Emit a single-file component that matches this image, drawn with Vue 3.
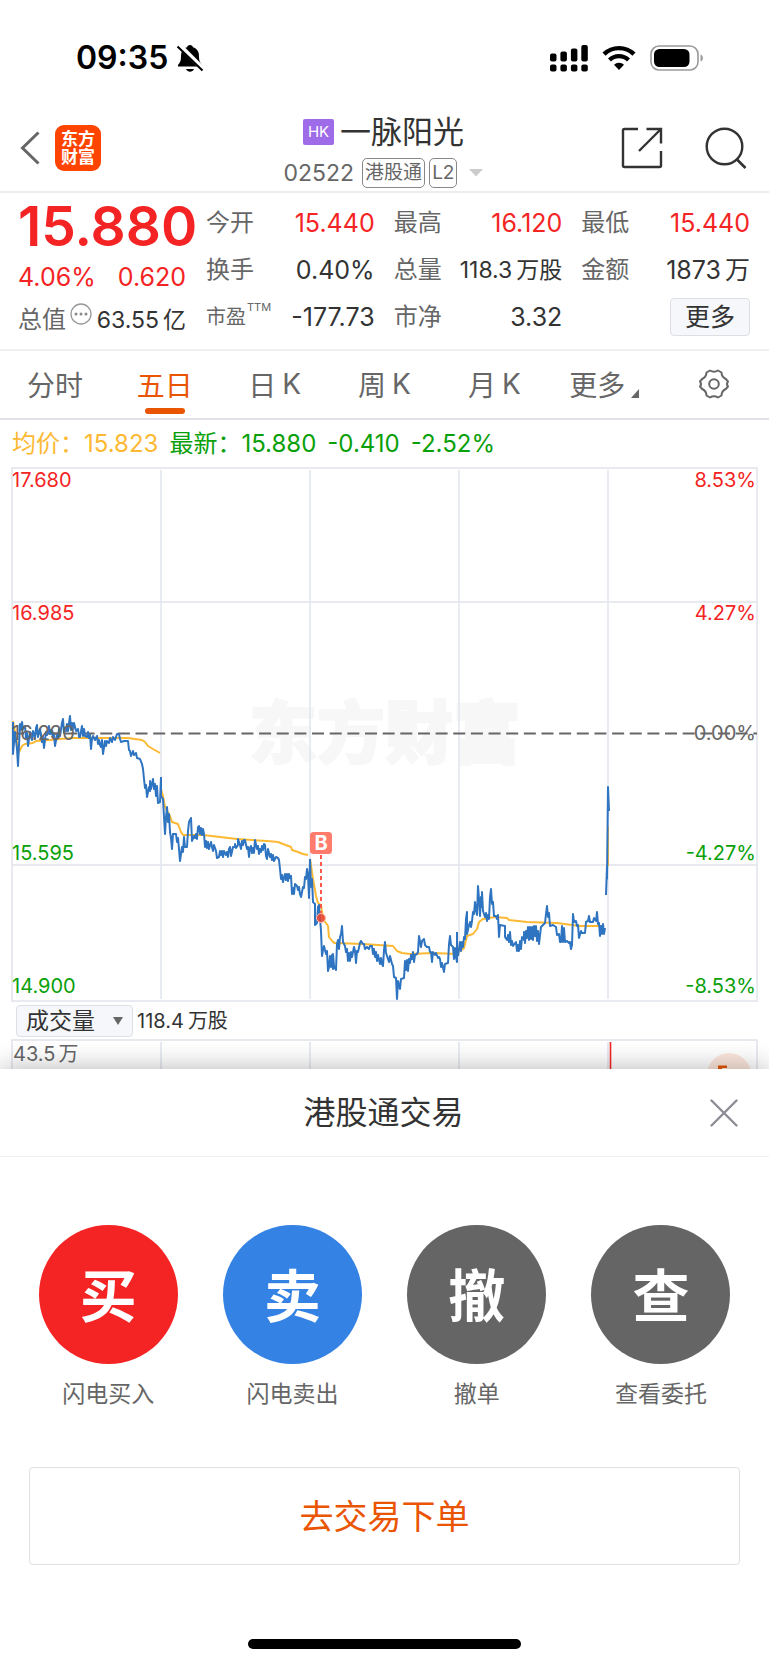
<template>
  <div class="page">
    <header class="status-bar">
      <div class="status-time">
        <span>09:35</span>
        <svg class="icon-bell" viewBox="0 0 28 28" aria-hidden="true">
          <path d="M14 1c1.6 0 2.8 1 3 2.300 4 1.400 6 4.600 6 8.700 0 5 1 6.500 3 9v1.500H2V21c2-2.500 3-4 3-9 0-4.100 2-7.300 6-8.700C11.200 2 12.400 1 14 1z" />
          <path d="M10 25h8c-.8 1.800-2.300 2.800-4 2.800s-3.200-1-4-2.800z" />
          <path d="M3 1l24 24" stroke="#fff" stroke-width="5" />
          <path d="M1.500 2.500l25 24" stroke="#000" stroke-width="2" />
        </svg>
      </div>
      <div class="status-icons">
        <svg class="icon-signal" viewBox="0 0 38 27" aria-hidden="true">
          <rect x="0" y="8.500" width="6.500" height="8" rx="2" />
          <rect x="10.400" y="6.500" width="6.500" height="10" rx="2" />
          <rect x="20.900" y="3.500" width="6.500" height="13" rx="2" />
          <rect x="31.300" y="0" width="6.500" height="16.500" rx="2" />
          <rect x="0" y="19.500" width="6.500" height="7" rx="2" />
          <rect x="10.400" y="19.500" width="6.500" height="7" rx="2" />
          <rect x="20.900" y="19.500" width="6.500" height="7" rx="2" />
          <rect x="31.300" y="19.500" width="6.500" height="7" rx="2" />
        </svg>
        <svg class="icon-wifi" viewBox="0 0 34 26" aria-hidden="true">
          <path d="M2 9.200a21.500 21.500 0 0 1 30 0" fill="none" stroke="#000" stroke-width="4.400" />
          <path d="M7.500 15a13.500 13.500 0 0 1 19 0" fill="none" stroke="#000" stroke-width="4.200" />
          <path d="M17 25l-5-5.200a7 7 0 0 1 10 0z" />
        </svg>
        <svg class="icon-battery" viewBox="0 0 54 26" aria-hidden="true">
          <rect x="1" y="1" width="47" height="24" rx="8" fill="none" stroke="#9a9a9a" stroke-width="1.600" />
          <rect x="4" y="4" width="35.500" height="18" rx="5.500" />
          <path d="M50.500 9.500c3.200 1 3.200 6 0 7z" fill="#9a9a9a" />
        </svg>
      </div>
    </header>

    <nav class="nav">
      <div class="nav-left">
        <button class="icon-button" aria-label="返回">
          <svg class="icon-back" viewBox="0 0 20 34" aria-hidden="true">
            <path d="M18.500 1.500L2.500 17l16 15.500" fill="none" stroke="#666" stroke-width="3" />
          </svg>
        </button>
        <a class="logo" href="#"><span>东方</span><span>财富</span></a>
      </div>
      <div class="nav-title">
        <h1 class="stock-name"><span class="market">HK</span>一脉阳光</h1>
        <div class="stock-code">
          <span class="code">02522</span>
          <span class="tag">港股通</span>
          <span class="tag">L2</span>
          <svg class="icon-caret" viewBox="0 0 14 8" aria-hidden="true"><path d="M0 0h14L7 7.500z" fill="#ccc" /></svg>
        </div>
      </div>
      <div class="nav-right">
        <button class="icon-button" aria-label="分享">
          <svg class="icon-tool" viewBox="0 0 42 42" aria-hidden="true">
            <path d="M17 2H3.500Q2 2 2 3.500V38.500Q2 40 3.500 40H38.500Q40 40 40 38.500V24M25.500 2H40V16.500M39.500 2.500L18 24" fill="none" stroke="#333" stroke-width="2.400" />
          </svg>
        </button>
        <button class="icon-button" aria-label="搜索">
          <svg class="icon-tool" viewBox="0 0 42 42" aria-hidden="true">
            <circle cx="19.500" cy="19.500" r="17.800" fill="none" stroke="#333" stroke-width="2.400" />
            <path d="M31.500 32l9 9" stroke="#333" stroke-width="2.600" />
          </svg>
        </button>
      </div>
    </nav>

    <section class="quote">
      <div class="quote-main">
        <div class="price">15.880</div>
        <div class="change"><span>4.06%</span><span>0.620</span></div>
        <div class="cap">
          <span class="label">总值</span>
          <svg class="icon-more" viewBox="0 0 22 22" aria-hidden="true">
            <circle cx="11" cy="11" r="10" fill="none" stroke="#999" stroke-width="1.300" />
            <circle cx="6" cy="11" r="1.500" fill="#888" />
            <circle cx="11" cy="11" r="1.500" fill="#888" />
            <circle cx="16" cy="11" r="1.500" fill="#888" />
          </svg>
          <span class="cap-value">63.55<span class="unit">亿</span></span>
        </div>
      </div>
      <dl class="quote-grid">
        <div v-for="item in quotes" :key="item.label" class="quote-item">
          <dt :class="{ small: item.sup }">{{ item.label }}<sup v-if="item.sup">{{ item.sup }}</sup></dt>
          <dd :class="{ up: item.up, small: item.small }">{{ item.value }}<span v-if="item.unit" class="unit">{{ item.unit }}</span></dd>
        </div>
        <div class="quote-item quote-item--end">
          <button class="more-button">更多</button>
        </div>
      </dl>
    </section>

    <div class="tabs">
      <button
        v-for="tab in tabs"
        :key="tab.label"
        class="tab"
        :class="{ 'tab--active': tab.label === activeTab }"
        @click="activeTab = tab.label"
      >
        <span>{{ tab.label }}</span>
        <span v-if="tab.suffix">{{ tab.suffix }}</span>
        <svg v-if="tab.menu" class="icon-corner" viewBox="0 0 8 9" aria-hidden="true"><path d="M8 0v9H0z" fill="#666" /></svg>
      </button>
      <button class="tab" aria-label="设置">
        <svg class="icon-gear" viewBox="0 0 32 32" aria-hidden="true">
          <path d="M12 2.500Q16 4.800 20 2.500L23.500 4.500Q23.600 8.900 27.800 11L30 13.500Q28 16 30 18.500L27.800 21Q23.600 23.100 23.500 27.500L20 29.500Q16 27.200 12 29.500L8.500 27.500Q8.400 23.100 4.200 21L2 18.500Q4 16 2 13.500L4.200 11Q8.400 8.900 8.500 4.500Z" fill="none" stroke="#666" stroke-width="2" stroke-linejoin="round" />
          <circle cx="16" cy="16" r="4.800" fill="none" stroke="#666" stroke-width="2" />
        </svg>
      </button>
    </div>

    <div class="legend">
      <span class="legend-avg">均价：15.823</span>
      <span>最新：15.880</span>
      <span>-0.410</span>
      <span>-2.52%</span>
    </div>

    <svg class="chart" viewBox="0 0 769 535" role="img" aria-label="五日走势">
      <text class="watermark" x="385" y="291" text-anchor="middle">东方财富</text>
      <g stroke="#e1e4ec" stroke-width="1.500">
        <path d="M12 135H757M12 398H757" />
        <path v-for="x in gridX" :key="x" :d="`M${x} 3V532`" />
        <rect x="12" y="1" width="745" height="533" fill="none" />
      </g>
      <path d="M12 266.500H757" stroke="#666" stroke-width="2" stroke-dasharray="12 5.650" />
      <polyline v-for="(line, i) in avgLines" :key="'a' + i" class="line line--avg" :points="line" />
      <polyline v-for="(line, i) in priceLines" :key="'p' + i" class="line line--price" :points="line" />
      <g class="axis">
        <text
          v-for="row in axis"
          :key="row.price"
          :x="12"
          :y="row.y"
          :fill="row.color"
        >{{ row.price }}</text>
        <text
          v-for="row in axis"
          :key="row.percent"
          :x="756"
          :y="row.y"
          :fill="row.color"
          text-anchor="end"
        >{{ row.percent }}</text>
      </g>
      <path d="M321 388V446" stroke="#fa5a4b" stroke-width="2" stroke-dasharray="4 3" />
      <circle cx="321" cy="451" r="4.500" fill="#e8412f" fill-opacity=".85" stroke="#ffb9a8" stroke-width="1" />
      <rect x="310" y="365" width="22" height="22" rx="3.500" fill="#ff7b6c" />
      <text class="marker" x="321" y="383" text-anchor="middle">B</text>
    </svg>

    <div class="volume-bar">
      <div class="volume-select">
        <select aria-label="指标">
          <option>成交量</option>
        </select>
        <svg class="icon-down" viewBox="0 0 10 8" aria-hidden="true"><path d="M0 0h10L5 8z" fill="#666" /></svg>
      </div>
      <span class="volume-value">118.4<span class="unit">万股</span></span>
    </div>

    <svg class="volume-chart" viewBox="0 0 769 30" role="img" aria-label="成交量">
      <g stroke="#e1e4ec" stroke-width="1.500" fill="none">
        <path d="M12 30V1H757V30" />
        <path v-for="x in gridX" :key="x" :d="`M${x} 3V30`" />
      </g>
      <path d="M610.500 3V30" stroke="#f42424" stroke-width="1.600" />
      <circle cx="729" cy="36" r="22" fill="#fce6dc" />
      <path d="M718 30V26.500H727V29H722V30z" fill="#ea5504" />
      <text class="axis" x="13" y="22" fill="#666">43.5<tspan dx="3">万</tspan></text>
    </svg>

    <section class="sheet">
      <header class="sheet-header">
        <h2>港股通交易</h2>
        <button class="icon-button sheet-close" aria-label="关闭">
          <svg class="icon-close" viewBox="0 0 28 28" aria-hidden="true">
            <path d="M1.500 1.500l25 25M26.500 1.500l-25 25" stroke="#8c8c94" stroke-width="2.400" stroke-linecap="round" />
          </svg>
        </button>
      </header>
      <div class="actions">
        <button v-for="action in actions" :key="action.label" class="action">
          <span class="action-icon" :class="'action-icon--' + action.type">{{ action.char }}</span>
          <span class="action-label">{{ action.label }}</span>
        </button>
      </div>
      <button class="order-button">去交易下单</button>
      <div class="home-indicator"></div>
    </section>
  </div>
</template>

<script setup>
import { ref } from 'vue'

const tabs = [
  { label: '分时' },
  { label: '五日' },
  { label: '日', suffix: 'K' },
  { label: '周', suffix: 'K' },
  { label: '月', suffix: 'K' },
  { label: '更多', menu: true }
]
const activeTab = ref('五日')

const quotes = [
  { label: '今开', value: '15.440', up: true },
  { label: '最高', value: '16.120', up: true },
  { label: '最低', value: '15.440', up: true },
  { label: '换手', value: '0.40%' },
  { label: '总量', value: '118.3', unit: '万股', small: true },
  { label: '金额', value: '1873', unit: '万' },
  { label: '市盈', sup: 'TTM', value: '-177.73' },
  { label: '市净', value: '3.32' }
]

const actions = [
  { char: '买', label: '闪电买入', type: 'buy' },
  { char: '卖', label: '闪电卖出', type: 'sell' },
  { char: '撤', label: '撤单', type: 'plain' },
  { char: '查', label: '查看委托', type: 'plain' }
]

const gridX = [161, 310, 459, 608]

const axis = [
  { price: '17.680', percent: '8.53%', y: 20, color: '#f42424' },
  { price: '16.985', percent: '4.27%', y: 153, color: '#f42424' },
  { price: '16.290', percent: '0.00%', y: 273, color: '#666' },
  { price: '15.595', percent: '-4.27%', y: 393, color: '#0aa00a' },
  { price: '14.900', percent: '-8.53%', y: 526, color: '#0aa00a' }
]

// one line per trading day
const priceLines = [
  '13,255 13,287 15,265 17,282 18,299 20,257 21,263 22,255 23,262 25,259 26,271 27,266 28,279 30,265 31,269 32,273 33,264 35,271 36,261 37,258 38,270 39,265 40,262 42,275 43,270 44,281 46,265 47,268 49,259 50,267 51,263 53,270 54,268 55,279 57,268 58,271 59,262 60,269 62,256 63,252 64,266 65,261 66,264 67,257 68,264 70,249 71,263 72,256 73,262 74,256 76,264 78,262 79,270 80,270 82,259 83,269 84,262 85,269 87,270 88,265 89,271 90,268 91,282 92,272 93,269 95,273 97,269 98,277 99,273 100,278 101,280 102,273 103,287 105,274 106,279 107,274 109,276 110,271 112,275 113,270 115,273 117,267 119,267 120,272 121,275 124,274 128,274 129,283 130,284 131,289 133,284 134,288 136,286 137,291 140,292 142,297 143,302 144,312 145,321 146,318 147,330 149,320 150,324 150,314 151,322 153,312 154,322 155,317 156,329 157,319 158,336 160,335 161,310',
  '161,310 161,329 163,332 164,350 165,367 166,350 167,340 168,355 169,347 170,365 171,371 172,382 173,367 176,367 177,375 178,371 179,382 180,394 182,380 183,385 184,370 185,380 187,380 188,364 189,355 191,351 192,374 194,369 195,371 196,367 197,372 198,360 199,364 199,359 200,367 201,361 202,368 203,362 204,367 205,380 206,374 207,381 208,375 209,382 211,375 212,380 213,384 214,378 216,384 217,391 219,390 220,384 221,388 222,384 223,390 224,384 226,388 227,385 228,390 229,382 230,380 231,389 233,380 235,380 235,377 236,381 238,378 238,372 240,378 241,382 242,374 243,378 244,373 245,373 247,382 248,380 249,390 250,381 251,379 252,386 253,381 254,386 255,373 257,382 258,379 259,387 260,382 261,385 262,379 263,383 264,377 265,378 266,389 267,392 268,382 270,390 271,387 272,393 273,388 274,394 276,390 278,391 279,393 280,402 281,412 282,408 283,415 285,407 286,413 287,407 288,414 289,407 290,411 291,409 292,427 293,421 294,427 295,417 297,419 298,423 299,420 300,427 301,430 303,420 304,421 305,410 306,412 307,402 308,408 309,431 310,392',
  '310,392 311,420 312,412 313,435 315,437 315,458 317,456 318,440 319,438 320,451 321,464 322,489 323,483 324,479 326,487 327,484 328,504 329,500 330,489 331,500 332,488 333,502 333,487 334,499 336,503 337,477 338,473 339,482 340,470 341,467 342,459 343,475 345,479 346,485 347,482 348,494 349,486 350,494 351,485 352,490 354,480 355,484 356,496 357,484 358,485 360,476 361,474 363,477 364,477 365,482 367,480 369,482 370,479 372,479 373,487 374,482 375,490 376,485 377,494 378,488 380,497 381,491 382,497 383,499 384,483 385,475 386,486 387,489 389,495 390,489 392,497 393,499 394,510 396,511 397,532 398,514 400,522 401,512 404,511 405,494 406,503 407,493 408,504 409,492 410,496 411,488 412,492 413,485 414,495 415,488 417,487 418,485 419,469 421,480 422,474 424,472 425,478 427,480 429,480 430,485 431,485 432,495 433,485 435,488 436,486 438,491 439,490 440,492 441,500 442,496 444,505 445,497 448,496 449,477 450,469 451,478 453,480 454,492 455,481 456,490 457,495 457,465',
  '458,489 460,475 461,484 462,475 463,480 464,470 465,472 466,452 467,445 467,467 469,458 470,455 471,460 472,454 473,445 474,447 475,435 476,443 477,448 478,419 479,432 480,449 481,430 482,440 482,425 483,444 485,450 486,446 487,454 488,448 489,452 490,430 491,422 492,437 493,435 494,449 496,449 497,452 498,448 499,470 500,458 505,459 505,470 507,473 508,468 509,475 510,465 511,478 512,474 513,479 516,475 517,484 518,478 519,484 520,474 521,482 522,470 524,473 524,465 525,476 526,464 527,471 528,460 529,473 530,460 531,472 532,460 533,473 534,459 535,469 536,459 537,474 538,464 539,477 541,460 542,459 545,456 546,447 547,439 548,450 549,446 550,459 553,458 556,460 557,468 559,467 560,475 561,475 562,459 563,475 564,461 565,475 567,474 569,476 570,475 571,482 572,478 573,447 574,455 576,454 577,459 578,458 579,471 581,464 582,466 585,466 586,455 588,454 589,449 590,455 593,455 594,451 596,454 597,445 598,457 599,456 600,469 601,459 602,467 603,457 604,467 605,461',
  '606,428 607,399 607,412 608,320 609,344'
]

const avgLines = [
  '13,254 15,265 19,285 22,279 25,277 33,276 36,274 50,273 60,272 73,271 128,271 142,273 145,275 148,279 153,282 160,286',
  '161,322 163,329 165,340 170,349 172,355 178,357 181,365 183,368 203,368 220,370 237,372 267,374 278,375 283,377 291,380 292,383 298,385 303,387 308,388',
  '310,392 313,412 316,429 318,436 321,438 323,452 328,459 329,470 333,475 335,476 363,477 393,479 397,484 402,486 410,487 433,486 457,487',
  '459,485 464,481 467,469 473,467 477,462 479,455 483,452 495,450 507,451 509,453 527,455 557,456 580,459 602,459',
  '608,359 608,399'
]
</script>

<style>
body {
  margin: 0;
  background: #fff;
}
</style>

<style scoped>
.page {
  overflow: hidden;
  font-family: Inter, "Noto Sans CJK SC", sans-serif;
  color: #333;
  background: #fff;
}

button,
select {
  padding: 0;
  border: none;
  background: none;
  font-family: inherit;
  color: inherit;
  cursor: pointer;
}

svg {
  display: block;
  flex-shrink: 0;
}

.unit {
  margin-left: 4px;
}

.status-bar {
  display: flex;
  justify-content: space-between;
  align-items: center;
  height: 92px;
  padding: 12px 65px 0 76px;
}

.status-time {
  display: flex;
  align-items: center;
  gap: 8px;
  font-size: 32px;
  font-weight: 600;
  line-height: 40px;
  color: #000;
}

.status-icons {
  display: flex;
  align-items: center;
  gap: 14px;
}

.icon-bell {
  width: 28px;
  height: 28px;
}

.icon-signal {
  width: 38px;
  height: 27px;
}

.icon-wifi {
  width: 34px;
  height: 26px;
}

.icon-battery {
  width: 54px;
  height: 26px;
}

.nav {
  display: grid;
  grid-template-columns: 1fr auto 1fr;
  align-items: center;
  height: 87px;
  padding: 0 22px 0 20px;
  border-bottom: 2px solid #ededed;
}

.nav-left {
  display: flex;
  align-items: center;
  gap: 15px;
}

.icon-back {
  width: 20px;
  height: 34px;
}

.logo {
  display: flex;
  flex-direction: column;
  justify-content: center;
  align-items: center;
  width: 46px;
  height: 46px;
  border-radius: 9px;
  background: #ff4400;
  color: #fff;
  font-size: 17px;
  font-weight: 700;
  line-height: 18px;
  text-decoration: none;
}

.nav-title {
  display: flex;
  flex-direction: column;
  align-items: center;
  gap: 8px;
  padding-top: 6px;
}

.stock-name {
  display: flex;
  align-items: center;
  gap: 6px;
  margin: 0;
  font-size: 31px;
  font-weight: 400;
  line-height: 36px;
}

.market {
  padding: 0 5px;
  border-radius: 2px;
  background: #9e6ce8;
  color: #fff;
  font-size: 15px;
  line-height: 26px;
}

.stock-code {
  display: flex;
  align-items: center;
  gap: 4px;
  color: #666;
}

.code {
  margin-right: 4px;
  font-size: 23px;
  line-height: 30px;
}

.tag {
  padding: 0 2px;
  border: 1px solid #888;
  border-radius: 5px;
  font-size: 19px;
  line-height: 28px;
}

.icon-caret {
  width: 14px;
  height: 8px;
  margin-left: 8px;
}

.nav-right {
  display: flex;
  justify-content: flex-end;
  gap: 42px;
}

.icon-tool {
  width: 42px;
  height: 42px;
}

.quote {
  display: flex;
  gap: 20px;
  padding: 7px 19px 8px 18px;
  border-bottom: 2px solid #f0f0f0;
}

.quote-main {
  display: flex;
  flex-direction: column;
  width: 168px;
}

.price {
  font-size: 55px;
  font-weight: 600;
  line-height: 52px;
  color: #f42424;
}

.change {
  display: flex;
  justify-content: space-between;
  font-size: 25px;
  line-height: 50px;
  color: #f42424;
}

.cap {
  display: flex;
  justify-content: space-between;
  align-items: center;
  line-height: 36px;
}

.label {
  font-size: 24px;
  color: #666;
}

.icon-more {
  width: 22px;
  height: 22px;
  margin-bottom: 12px;
}

.cap-value {
  font-size: 23px;
}

.quote-grid {
  display: grid;
  grid-template-columns: repeat(3, 1fr);
  grid-auto-rows: 47px;
  column-gap: 19px;
  flex: 1;
  margin: 0;
}

.quote-item {
  display: flex;
  justify-content: space-between;
  align-items: center;
  line-height: 44px;
  padding-bottom: 2px;
  white-space: nowrap;
}

.quote-item--end {
  justify-content: flex-end;
}

.quote-item dt {
  font-size: 24px;
  color: #666;
}

.quote-item dt.small {
  display: flex;
  gap: 1px;
  font-size: 20px;
}

.quote-item sup {
  font-size: 11px;
  line-height: 24px;
}

.quote-item dd {
  margin: 0;
  font-size: 25px;
}

.quote-item dd.small {
  font-size: 23px;
}

.quote-item dd.up {
  color: #f42424;
}

.more-button {
  width: 80px;
  height: 38px;
  border: 1px solid #dcdfe6;
  border-radius: 4px;
  background: #f6f7fa;
  font-size: 25px;
  line-height: 32px;
}

.tabs {
  display: grid;
  grid-template-columns: repeat(7, 1fr);
  height: 67px;
  border-bottom: 2px solid #e1e2e8;
}

.tab {
  position: relative;
  display: flex;
  justify-content: center;
  align-items: center;
  gap: 6px;
  padding-bottom: 2px;
  font-size: 28px;
  color: #666;
}

.tab--active {
  color: #ea5504;
}

.tab--active::after {
  content: '';
  position: absolute;
  bottom: 4px;
  left: 50%;
  width: 40px;
  height: 6px;
  margin-left: -20px;
  border-radius: 3px;
  background: #ea5504;
}

.icon-corner {
  width: 8px;
  height: 9px;
  margin-top: 20px;
}

.icon-gear {
  width: 32px;
  height: 32px;
}

.legend {
  display: flex;
  gap: 11px;
  padding: 0 12px;
  font-size: 24px;
  line-height: 47px;
  color: #0aa00a;
}

.legend-avg {
  color: #fdb933;
}

.chart,
.volume-chart {
  width: 100%;
}

.watermark {
  font-size: 68px;
  font-weight: 900;
  fill: #f7f7f7;
  stroke: #f7f7f7;
  stroke-width: 2px;
}

.axis {
  font-size: 20px;
}

.marker {
  font-size: 20px;
  font-weight: 700;
  fill: #fff;
}

.line {
  fill: none;
  stroke-width: 2;
  stroke-linejoin: round;
}

.line--avg {
  stroke: #fdb933;
}

.line--price {
  stroke: #2f74c0;
}

.volume-bar {
  display: flex;
  align-items: center;
  gap: 4px;
  height: 37px;
  padding: 0 16px;
}

.volume-select {
  position: relative;
}

.volume-select select {
  width: 117px;
  height: 32px;
  padding: 0 9px;
  border: 1px solid #dcdfe6;
  border-radius: 4px;
  background: #f6f7fa;
  font-size: 23px;
  line-height: 30px;
  appearance: none;
}

.icon-down {
  position: absolute;
  top: 12px;
  right: 10px;
  width: 10px;
  height: 8px;
  pointer-events: none;
}

.volume-value {
  font-size: 20px;
  line-height: 30px;
}

.sheet {
  position: relative;
  padding-bottom: 16px;
  background: #fff;
  box-shadow: 0 0 26px rgba(0, 0, 0, 0.3);
}

.sheet-header {
  display: grid;
  grid-template-columns: 1fr auto 1fr;
  align-items: center;
  height: 87px;
  padding: 0 31px 0 29px;
  border-bottom: 1px solid #efefef;
}

.sheet-header h2 {
  grid-column: 2;
  margin: 0;
  font-size: 32px;
  font-weight: 400;
  line-height: 40px;
}

.sheet-close {
  justify-self: end;
}

.icon-close {
  width: 28px;
  height: 28px;
}

.actions {
  display: grid;
  grid-template-columns: repeat(4, 1fr);
  padding: 68px 16px 0;
}

.action {
  display: flex;
  flex-direction: column;
  align-items: center;
  gap: 14px;
}

.action-icon {
  display: flex;
  justify-content: center;
  align-items: center;
  box-sizing: border-box;
  width: 139px;
  height: 139px;
  padding-bottom: 6px;
  border-radius: 50%;
  color: #fff;
  font-size: 57px;
  font-weight: 700;
}

.action-icon--buy {
  background: #f42424;
}

.action-icon--sell {
  background: #3482e4;
}

.action-icon--plain {
  background: #656565;
}

.action-label {
  font-size: 23px;
  line-height: 32px;
  color: #666;
}

.order-button {
  display: block;
  width: calc(100% - 58px);
  height: 98px;
  margin: 57px 29px 74px;
  padding-bottom: 4px;
  border: 1px solid #dfe1e6;
  border-radius: 4px;
  font-size: 34px;
  color: #ea5504;
}

.home-indicator {
  width: 273px;
  height: 10px;
  margin: 0 auto;
  border-radius: 5px;
  background: #000;
}
</style>
